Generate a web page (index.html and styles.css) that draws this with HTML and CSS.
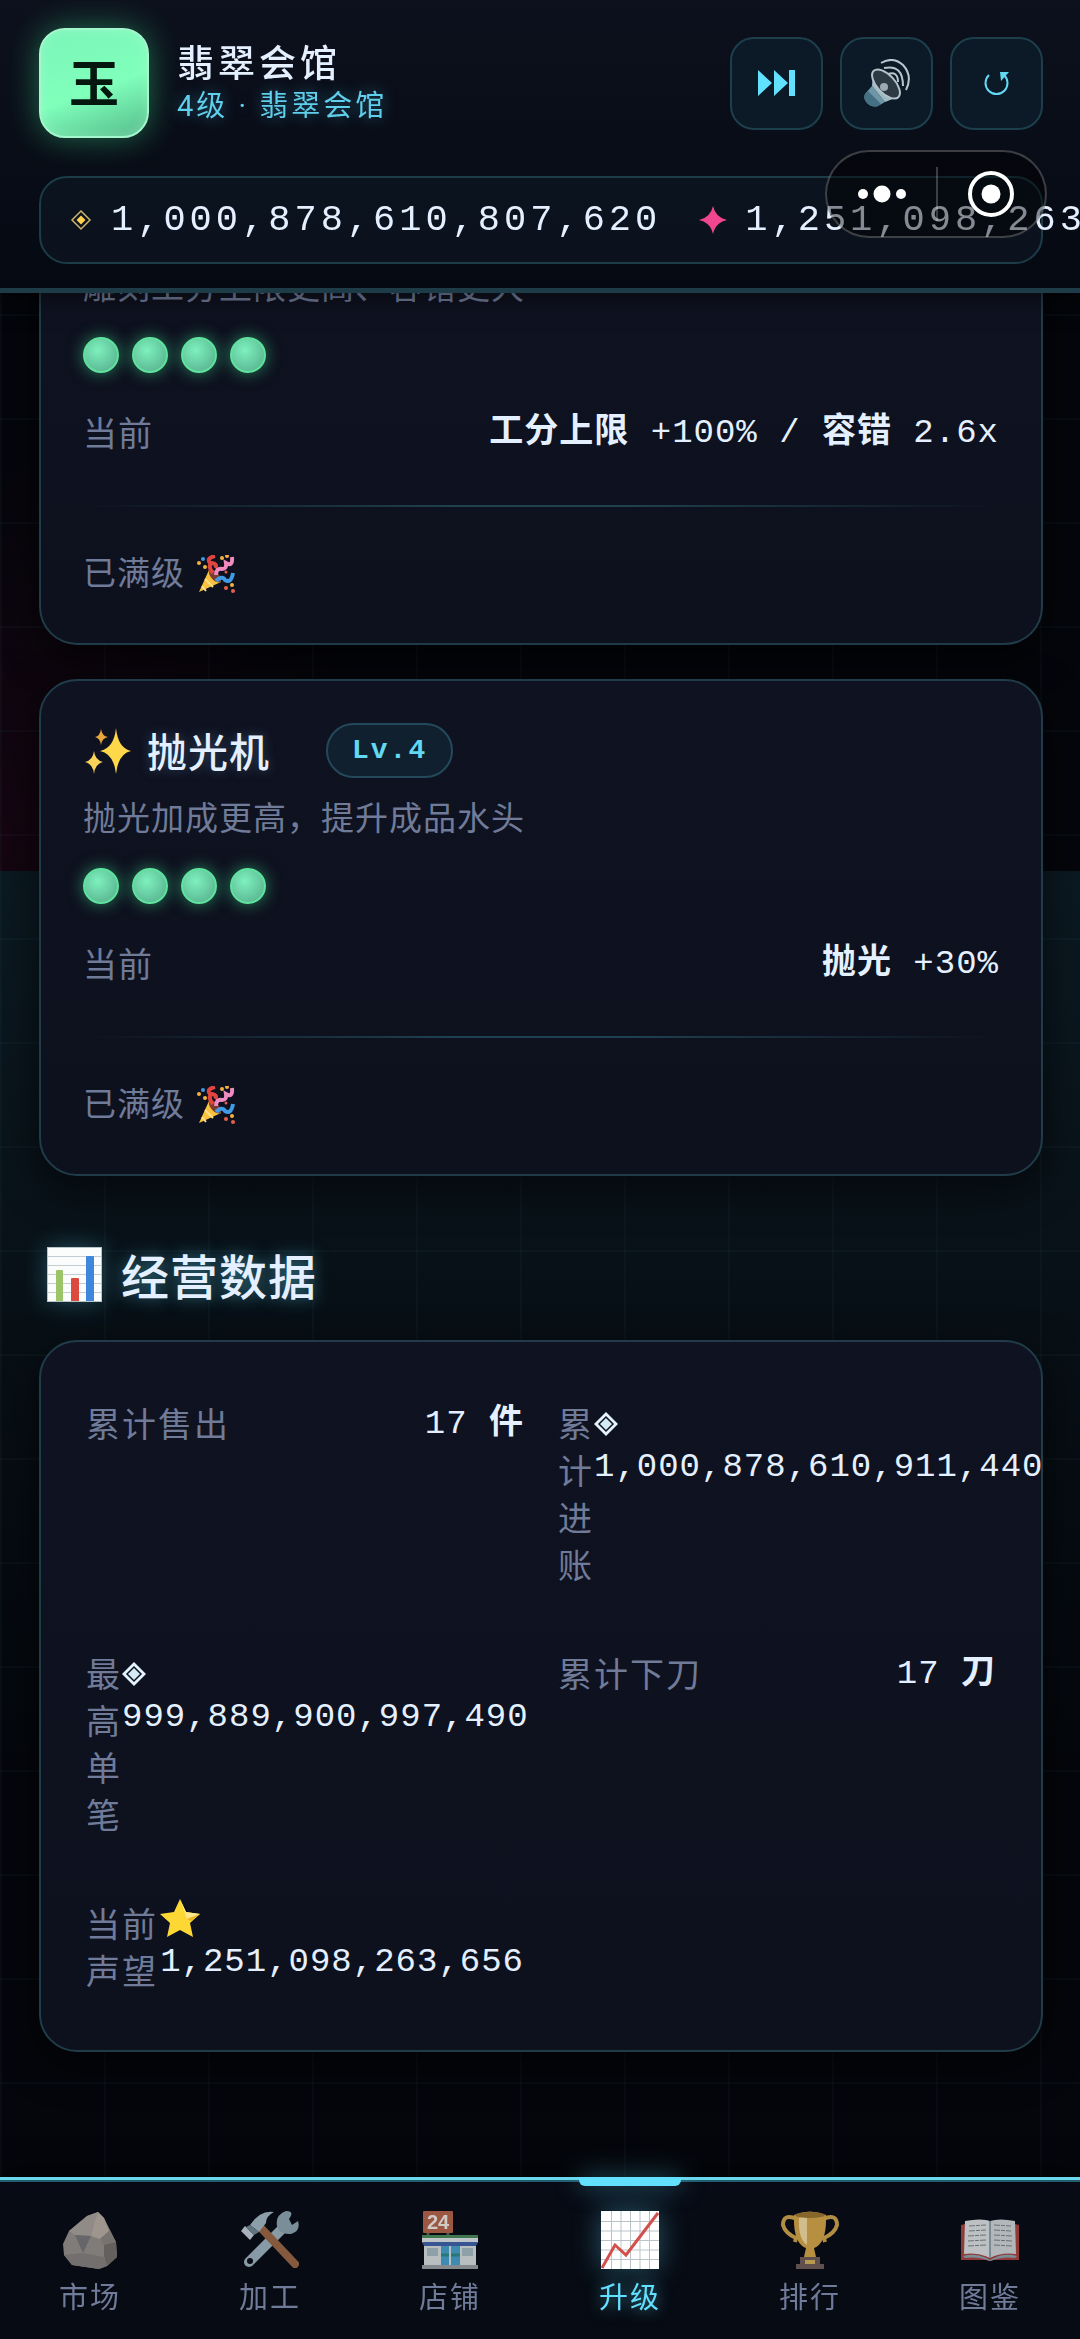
FILE: index.html
```html
<!DOCTYPE html>
<html lang="zh-CN">
<head>
    <meta charset="UTF-8">
    <meta name="viewport" content="width=device-width, initial-scale=1">
    <title>翡翠会馆</title>
    <link rel="stylesheet" href="styles.css">
</head>
<body>
    <!-- shared icons -->
    <svg class="sprite" width="0" height="0" aria-hidden="true">
        <symbol id="party" viewBox="0 0 38 38">
            <path d="M2 37 L12 15 Q20 19 24 27 Z" fill="#f9c23c"/>
            <path d="M5 31 L9 36 M8 24 L16 32" stroke="#ffe08a" stroke-width="2"/>
            <ellipse cx="18" cy="21" rx="8" ry="4" transform="rotate(48 18 21)" fill="#7a3b30"/>
            <path d="M16 18 Q10 11 15 8 Q21 9 18 13 M18 1 Q9 3 13 8" fill="none" stroke="#e0453f" stroke-width="4"/>
            <path d="M19 20 Q19 13 25 14 Q30 14 29 8 Q36 12 35 2" fill="none" stroke="#f08bc0" stroke-width="4"/>
            <path d="M19 26 Q25 20 28 25 Q34 29 36 18" fill="none" stroke="#3f9be6" stroke-width="4"/>
            <g fill="#f4b13d">
                <circle cx="2" cy="8" r="2"/><circle cx="8" cy="12" r="2"/><circle cx="25" cy="3" r="2"/>
                <circle cx="30" cy="1" r="2"/><circle cx="35" cy="30" r="2"/>
            </g>
            <circle cx="6" cy="4" r="2" fill="#3f9be6"/>
            <g fill="#e8604c"><circle cx="29" cy="33" r="2"/><circle cx="36" cy="36" r="2"/><circle cx="29" cy="17" r="1.5"/></g>
        </symbol>
        <symbol id="coin" viewBox="0 0 24 24">
            <path d="M12 0 L24 12 L12 24 L0 12 Z" fill="#e4f4ff"/>
            <path d="M12 5 L19 12 L12 19 L5 12 Z" fill="#d3e9f5" stroke="#0e1220" stroke-width="1.5"/>
        </symbol>
    </svg>

    <header class="topbar">
        <div class="topbar-row">
            <div class="logo">玉</div>
            <div class="shop">
                <h1>翡翠会馆</h1>
                <p>4级 · 翡翠会馆</p>
            </div>
            <div class="tools">
                <button type="button" aria-label="跳过">
                    <svg width="38" height="26" viewBox="0 0 38 26" fill="#62e0ff"><path d="M0 0 L14 13 L0 26 Z M16 0 L30 13 L16 26 Z M31 0 H37 V26 H31 Z"/></svg>
                </button>
                <button type="button" aria-label="声音">
                    <svg width="46" height="48" viewBox="0 0 46 48">
                        <path d="M8 27 L21 43 L14 47 Q8 49 3 44 Q-1 40 1 35 Z" fill="#6f96a6"/>
                        <path d="M1 35 L4 32 L17 45 L14 47 Q8 49 3 44 Q-1 40 1 35 Z" fill="#456f82"/>
                        <path d="M8 27 L9 14 L34 38 L21 43 Z" fill="#9dbac5"/>
                        <ellipse cx="22" cy="25" rx="18" ry="9" transform="rotate(47 22 25)" fill="#2d3a43" stroke="#b4c2ca" stroke-width="2"/>
                        <circle cx="20" cy="28" r="4" fill="#9aabb5"/>
                        <g fill="none" stroke="#b9c6cf" stroke-width="2">
                            <path d="M24 15 Q34 12 34 23"/>
                            <path d="M20 9 Q39 5 39 27"/>
                            <path d="M17 4 Q29 -3 39 6 Q49 17 42 31"/>
                        </g>
                    </svg>
                </button>
                <button type="button" aria-label="重新开始">
                    <svg width="26" height="26" viewBox="0 0 26 26" fill="none" stroke="#62d8f2" stroke-width="2"><path d="M5 5 A11 11 0 1 0 20 5"/><path d="M25 2 L16 2 L17 11 Z" fill="#62d8f2" stroke="none"/></svg>
                </button>
            </div>
        </div>

        <div class="wallet">
            <div class="money">
                <svg width="24" height="24" viewBox="0 0 24 24"><path d="M12 3 L21 12 L12 21 L3 12 Z" fill="none" stroke="#c9b46c" stroke-width="1.5"/><path d="M12 7.500 L16.500 12 L12 16.500 L7.500 12 Z" fill="#ffd24d"/></svg>
                <span>1,000,878,610,807,620</span>
            </div>
            <div class="money">
                <svg width="28" height="28" viewBox="0 0 28 28"><path d="M14 0 Q16.500 11.500 28 14 Q16.500 16.500 14 28 Q11.500 16.500 0 14 Q11.500 11.500 14 0 Z" fill="#f0468f"/></svg>
                <span>1,251,098,263,656</span>
            </div>
        </div>

        <!-- mini program capsule -->
        <div class="capsule">
            <button type="button" aria-label="更多">
                <svg width="48" height="18" viewBox="0 0 48 18" fill="#fff"><circle cx="5" cy="9" r="5"/><circle cx="24" cy="9" r="8.500"/><circle cx="43" cy="9" r="5"/></svg>
            </button>
            <button type="button" aria-label="关闭">
                <svg width="48" height="48" viewBox="0 0 48 48"><circle cx="24" cy="24" r="21" fill="none" stroke="#fff" stroke-width="4"/><circle cx="24" cy="24" r="9.500" fill="#fff"/></svg>
            </button>
        </div>
    </header>

    <main class="content">
        <section class="card upgrade upgrade-first">
            <p class="desc">雕刻工分上限更高、容错更大</p>
            <div class="dots"><i></i><i></i><i></i><i></i></div>
            <div class="row">
                <span class="label">当前</span>
                <span class="value"><b>工分上限</b> +100% / <b>容错</b> 2.6x</span>
            </div>
            <hr>
            <p class="done">已满级 <svg width="38" height="38"><use href="#party"/></svg></p>
        </section>

        <section class="card upgrade">
            <div class="card-head">
                <svg width="46" height="46" viewBox="0 0 46 46">
                    <path d="M31 0 Q33 20 46 23 Q33 26 31 46 Q29 26 15 23 Q29 20 31 0 Z" fill="#ffd84a"/>
                    <path d="M9 23 Q10 32 18 34 Q10 36 9 46 Q8 36 0 34 Q8 32 9 23 Z" fill="#fcd35a"/>
                    <path d="M16 1 Q17 8 23 9 Q17 10 16 17 Q15 10 10 9 Q15 8 16 1 Z" fill="#e9a63a"/>
                </svg>
                <h3>抛光机</h3>
                <span class="level">Lv.4</span>
            </div>
            <p class="desc">抛光加成更高，提升成品水头</p>
            <div class="dots"><i></i><i></i><i></i><i></i></div>
            <div class="row">
                <span class="label">当前</span>
                <span class="value"><b>抛光</b> +30%</span>
            </div>
            <hr>
            <p class="done">已满级 <svg width="38" height="38"><use href="#party"/></svg></p>
        </section>

        <h2>
            <svg width="55" height="55" viewBox="0 0 55 55">
                <rect width="55" height="55" fill="#fbfdfd"/>
                <path d="M0 9.500 H55 M0 18.500 H55 M0 27.500 H55 M0 36.500 H55 M0 45.500 H55" stroke="#c3cdd2" stroke-width="1"/>
                <rect x=".5" y=".5" width="54" height="54" fill="none" stroke="#b8c3c8"/>
                <path d="M9 54 V24 Q9 23 10 23 H15 Q16 23 16 24 V54 Z" fill="#9cc56a"/>
                <path d="M24 54 V32 Q24 31 25 31 H31 Q32 31 32 32 V54 Z" fill="#dc4a3f"/>
                <path d="M39 54 V10 Q39 9 40 9 H46 Q47 9 47 10 V54 Z" fill="#3f87dc"/>
            </svg>
            经营数据
        </h2>

        <section class="card stats">
            <div class="stat">
                <span class="label">累计售出</span>
                <span class="value">17 <b>件</b></span>
            </div>
            <div class="stat">
                <span class="label">累计进账</span>
                <span class="value"><svg width="24" height="24"><use href="#coin"/></svg> 1,000,878,610,911,440</span>
            </div>
            <div class="stat">
                <span class="label">最高单笔</span>
                <span class="value"><svg width="24" height="24"><use href="#coin"/></svg> 999,889,900,997,490</span>
            </div>
            <div class="stat">
                <span class="label">累计下刀</span>
                <span class="value">17 <b>刀</b></span>
            </div>
            <div class="stat">
                <span class="label">当前声望</span>
                <span class="value fame"><svg width="40" height="38" viewBox="0 0 40 38"><path d="M20 0 L26 13 L40 15 L30 24 L33 38 L20 31 L7 38 L10 24 L0 15 L14 13 Z" fill="#fdd835"/><path d="M20 0 L26 13 L40 15 L27 20 Z" fill="#ffe88a"/><path d="M40 15 L27 20 L31 22 Z" fill="#eab422"/></svg> 1,251,098,263,656</span>
            </div>
        </section>
    </main>

    <nav class="tabbar">
        <a href="#">
            <svg width="58" height="58" viewBox="0 0 58 58">
                <path d="M26 5 L37 1 L43 7 L55 31 L56 46 L46 55 L38 58 L11 54 L3 44 L2 33 L8 20 Z" fill="#96908b"/>
                <path d="M26 5 L37 1 L33 12 L30 25 L14 24 L8 20 Z" fill="#a9a29b"/>
                <path d="M37 1 L43 7 L48 20 L39 28 L30 25 L33 12 Z" fill="#b8aea4"/>
                <path d="M14 24 L30 25 L22 42 Z" fill="#77777a"/>
                <path d="M48 20 L55 31 L43 34 L39 28 Z" fill="#8d8680"/>
                <path d="M3 44 L22 42 L43 46 L46 55 L38 58 L11 54 Z" fill="#85817e"/>
                <path d="M55 31 L56 46 L46 55 L43 45 L43 34 Z" fill="#756f6b"/>
            </svg>
            市场
        </a>
        <a href="#">
            <svg width="58" height="58" viewBox="0 0 58 58">
                <path d="M8 51 L42 17" stroke="#9fb4bf" stroke-width="10" stroke-linecap="round"/>
                <path d="M45 0 Q54 0 48 8 L51 14 L57 10 Q60 20 50 23 Q39 24 36 15 Q34 4 45 0 Z" fill="#8fa5b1"/>
                <circle cx="9" cy="50" r="3" fill="#0a0d14"/>
                <path d="M20 17 L54 53" stroke="#9a6745" stroke-width="8" stroke-linecap="round"/>
                <path d="M9 14 Q19 -1 33 1 Q25 5 25 12 L18 21 Z" fill="#a4b8c3"/>
                <path d="M4 15 L13 24 L9 29 L0 20 Z" fill="#c3d0d8"/>
                <path d="M9 14 L18 21 L13 24 L5 16 Z" fill="#708894"/>
            </svg>
            加工
        </a>
        <a href="#">
            <svg width="58" height="58" viewBox="0 0 58 58">
                <path d="M7 20 V26 M27 20 V26" stroke="#4f6b4f" stroke-width="3"/>
                <rect x="2" y="0" width="30" height="22" rx="1" fill="#b5654a"/>
                <text x="17" y="18" text-anchor="middle" class="sign">24</text>
                <rect x="1" y="24" width="56" height="6" fill="#4c8a5a"/>
                <rect x="1" y="27" width="56" height="5" fill="#dfe6e8"/>
                <path d="M1 31 H57 L55 35 H3 Z" fill="#4063a8"/>
                <rect x="3" y="35" width="52" height="19" fill="#d9dee0"/>
                <rect x="6" y="37" width="11" height="8" fill="#a6bcc2"/><rect x="41" y="37" width="11" height="8" fill="#a6bcc2"/>
                <rect x="20" y="35" width="19" height="19" fill="#47a2cc"/>
                <path d="M20 44 H39" stroke="#2f8a8a" stroke-width="3"/>
                <path d="M29 35 V54" stroke="#d9dee0" stroke-width="2"/>
                <rect x="1" y="54" width="56" height="4" fill="#9a9fa3"/>
            </svg>
            店铺
        </a>
        <a href="#" class="active">
            <svg width="58" height="58" viewBox="0 0 58 58">
                <rect width="58" height="58" fill="#fff"/>
                <path d="M10.500 0 V58 M20 0 V58 M29.500 0 V58 M39 0 V58 M48.500 0 V58 M0 10.500 H58 M0 20 H58 M0 29.500 H58 M0 39 H58 M0 48.500 H58" stroke="#b9c3c8" stroke-width="1"/>
                <path d="M1 57 L14 34 L25 44 L57 2" fill="none" stroke="#d2504b" stroke-width="3"/>
            </svg>
            升级
        </a>
        <a href="#">
            <svg width="58" height="58" viewBox="0 0 58 58">
                <path d="M16 8 Q2 2 2 14 Q4 22 15 27 L14 31 M42 8 Q56 2 56 14 Q54 22 43 27 L44 31" fill="none" stroke="#d0a54a" stroke-width="4"/>
                <path d="M13 4 Q29 -3 45 4 Q46 32 33 37 L35 46 H23 L25 37 Q12 32 13 4 Z" fill="#d6a748"/>
                <path d="M18 7 Q24 5 26 6 V34 Q17 28 18 7 Z" fill="#f4dda0"/>
                <ellipse cx="29" cy="4" rx="15" ry="3" fill="#9d7630"/>
                <path d="M19 46 H39 V53 H43 V58 H15 V53 H19 Z" fill="#6f5b58"/>
                <rect x="24" y="49" width="10" height="4" fill="#d6b25c"/>
            </svg>
            排行
        </a>
        <a href="#">
            <svg width="58" height="58" viewBox="0 0 58 58">
                <path d="M0 14 L4 13 H54 L58 14 V49 H33 L29 50 L25 49 H0 Z" fill="#a94440"/>
                <path d="M2 45 Q16 41 29 49 Q42 41 56 45 L54 47 Q42 45 29 50 Q16 45 4 47 Z" fill="#90a4ae"/>
                <path d="M4 10 Q20 7 29 10 V47 Q18 41 3 43 Z" fill="#dde1e2"/>
                <path d="M54 10 Q38 7 29 10 V47 Q40 41 55 43 Z" fill="#d0d6d8"/>
                <path d="M29 10 V47" stroke="#8ea2ac" stroke-width="2"/>
                <path d="M8 15 L25 14 M8 20 L25 19 M7 25 L25 24 M7 30 L25 29 M7 35 L25 34 M33 14 L50 15 M33 19 L50 20 M33 24 L51 25 M33 29 L51 30 M33 34 L51 35" stroke="#7b8285" stroke-width="1" stroke-dasharray="6 1 4 1"/>
            </svg>
            图鉴
        </a>
    </nav>
</body>
</html>
```
FILE: styles.css
```css
* {
    box-sizing: border-box;
}
body {
    margin: 0;
    min-height: 100vh;
    overflow-x: hidden;
    color: #e4f0ff;
    font-family: "Noto Sans CJK SC", sans-serif;
    background:
        linear-gradient(90deg, rgba(98, 224, 255, 0.03) 2px, transparent 2px) 0 0 / 104px 104px,
        linear-gradient(rgba(98, 224, 255, 0.03) 2px, transparent 2px) 0 2px / 104px 104px,
        radial-gradient(circle 400px at 0 840px, rgba(60, 4, 28, 0.3), transparent) 0 0 / 100% 871px no-repeat,
        linear-gradient(rgba(16, 38, 48, 0.6), transparent) 0 871px / 100% 900px no-repeat,
        #04060b;
}
h1, h2, h3, p {
    margin: 0;
}
button {
    padding: 0;
    cursor: pointer;
}
.sprite {
    position: absolute;
}

/* header */
.topbar {
    position: sticky;
    top: 0;
    z-index: 2;
    padding: 28px 37px 24px 39px;
    border-bottom: 5px solid #1e3b48;
    background: linear-gradient(#0d111d, #050912);
    box-shadow: 0 4px 24px rgba(0, 0, 0, 0.5);
}
.topbar-row {
    display: flex;
    align-items: center;
    gap: 28px;
}
.logo {
    display: grid;
    place-items: center;
    width: 110px;
    height: 110px;
    padding-bottom: 6px;
    border: 2px solid #a4f7cc;
    border-radius: 26px;
    background: linear-gradient(160deg, #7bf5b8, #80ffbb 55%, #55bb8b);
    box-shadow: 0 0 32px rgba(60, 220, 140, 0.45), inset 0 0 12px rgba(200, 255, 225, 0.3);
    color: #04180f;
    font-size: 50px;
    font-weight: bold;
    line-height: 60px;
}
.shop {
    flex: 1;
    padding-top: 2px;
}
.shop h1 {
    font-size: 37px;
    font-weight: 500;
    line-height: 44px;
    letter-spacing: 4px;
}
.shop p {
    color: #5fcfec;
    font-family: Roboto, "Noto Sans CJK SC", sans-serif;
    font-size: 29px;
    line-height: 46px;
    letter-spacing: 3px;
    text-shadow: 0 0 16px rgba(80, 210, 255, 0.4);
}
.tools {
    display: flex;
    gap: 17px;
}
.tools button {
    display: grid;
    place-items: center;
    width: 93px;
    height: 93px;
    border: 2px solid #1d3f4c;
    border-radius: 24px;
    background: #0c1926;
}
.wallet {
    display: flex;
    align-items: center;
    gap: 38px;
    height: 88px;
    margin-top: 38px;
    padding: 0 28px;
    border: 2px solid #1c3c48;
    border-radius: 28px;
    background: linear-gradient(#0a131e, #0c121d);
}
.money {
    display: flex;
    align-items: center;
    gap: 18px;
    font-family: "Liberation Mono", monospace;
    font-size: 37px;
    letter-spacing: 4px;
}
.money svg {
    flex: none;
}
.capsule {
    position: absolute;
    top: 150px;
    right: 33px;
    display: flex;
    width: 222px;
    height: 88px;
    border: 2px solid rgba(255, 255, 255, 0.22);
    border-radius: 44px;
    background: rgba(0, 0, 0, 0.42);
}
.capsule button {
    flex: 1;
    border: none;
    background: none;
}
.capsule button + button {
    background: linear-gradient(rgba(255, 255, 255, 0.22), rgba(255, 255, 255, 0.22)) 0 50% / 2px 54px no-repeat;
}
.capsule svg {
    display: block;
    margin: auto;
}

/* page */
.content {
    margin-top: -31px;
    padding: 0 37px 180px 39px;
}
.card {
    margin-bottom: 34px;
    padding: 42px;
    border: 2px solid #1f3c48;
    border-radius: 38px;
    background: linear-gradient(#0f1220, #0d111e);
    box-shadow: 0 12px 40px rgba(0, 0, 0, 0.6);
}
.upgrade {
    padding-bottom: 46px;
}
.upgrade-first {
    padding-top: 0;
    border-top: none;
    border-radius: 0 0 38px 38px;
}
.card-head {
    display: flex;
    align-items: center;
    height: 55px;
    margin-bottom: 15px;
    padding-left: 2px;
}
.card-head h3 {
    margin: 0 56px 0 16px;
    font-size: 40px;
    font-weight: 500;
    line-height: 55px;
    letter-spacing: 1px;
    text-shadow: 0 0 12px rgba(130, 200, 255, 0.3);
}
.level {
    padding: 0 24px;
    border: 2px solid #23495a;
    border-radius: 28px;
    background: #10202f;
    color: #62d8f2;
    font-family: "Liberation Mono", monospace;
    font-size: 28px;
    font-weight: bold;
    line-height: 51px;
    letter-spacing: 2px;
}
.desc, .done {
    color: #6f7b98;
    font-size: 33px;
    line-height: 47px;
    letter-spacing: 1px;
}
.label {
    color: #6f7b98;
    font-size: 34px;
    line-height: 47px;
    letter-spacing: 1px;
}
.dots {
    display: flex;
    gap: 13px;
    margin: 28px 0 35px;
}
.dots i {
    width: 36px;
    height: 36px;
    border: 2px solid #5fe39f;
    border-radius: 50%;
    background: radial-gradient(circle at 40% 35%, #7ef0bd, #5bb893 80%);
    box-shadow: 0 0 16px rgba(60, 220, 140, 0.55);
}
.row, .stat {
    display: flex;
    justify-content: space-between;
    align-items: flex-start;
}
.value {
    padding-top: 4px;
    color: #e4f0ff;
    font-family: "Liberation Mono", "Noto Sans CJK SC", monospace;
    font-size: 34px;
    line-height: 43px;
    letter-spacing: 1px;
}
.upgrade hr {
    height: 2px;
    margin: 50px 0 41px;
    border: none;
    background: linear-gradient(90deg, transparent, #1f404d 40%, #1f404d 60%, transparent);
}
.done svg, .value svg {
    vertical-align: middle;
}
.done svg {
    margin: 0 0 4px 4px;
}
h2 {
    display: flex;
    align-items: center;
    gap: 19px;
    margin: 64px 8px 32px;
    font-size: 48px;
    font-weight: 500;
    line-height: 68px;
    letter-spacing: 1px;
    text-shadow: 0 0 16px rgba(98, 224, 255, 0.5);
}
h2 svg {
    box-shadow: 0 0 24px rgba(98, 224, 255, 0.3);
}
.stats {
    display: grid;
    grid-template-columns: repeat(2, minmax(0, 1fr));
    gap: 28px;
    margin-bottom: 0;
    padding: 40px 42px;
}
.stat {
    padding: 17px 3px;
}
.stat .label {
    letter-spacing: 2px;
}
.stat .fame {
    padding-top: 0;
    line-height: 38px;
}
.fame svg {
    margin-bottom: 6px;
}

/* bottom tabs */
.tabbar {
    position: fixed;
    bottom: 0;
    left: 0;
    right: 0;
    z-index: 2;
    display: flex;
    border-top: 3px solid #6bd8ec;
    background: linear-gradient(#080b15, #070b13);
    box-shadow: inset 0 2px #235d70, 0 -4px 24px rgba(0, 0, 0, 0.6);
}
.tabbar a {
    position: relative;
    flex: 1;
    padding: 31px 0 24px;
    color: #6f7b98;
    font-size: 29px;
    line-height: 40px;
    letter-spacing: 2px;
    text-align: center;
    text-decoration: none;
}
.tabbar svg {
    display: block;
    margin: 0 auto 6px;
    opacity: 0.85;
}
.sign {
    fill: #f4ece6;
    font: bold 20px "Liberation Sans", sans-serif;
    letter-spacing: 0;
}
.tabbar .active {
    color: #62e0ff;
    text-shadow: 0 0 16px rgba(98, 224, 255, 0.6);
}
.tabbar .active svg {
    opacity: 1;
    box-shadow: 0 0 28px rgba(98, 224, 255, 0.35);
}
.tabbar .active::before {
    content: "";
    position: absolute;
    top: -3px;
    left: 50%;
    width: 102px;
    height: 9px;
    margin-left: -51px;
    border-radius: 0 0 6px 6px;
    background: #62e0ff;
    box-shadow: 0 0 24px rgba(98, 224, 255, 0.5);
}
```
